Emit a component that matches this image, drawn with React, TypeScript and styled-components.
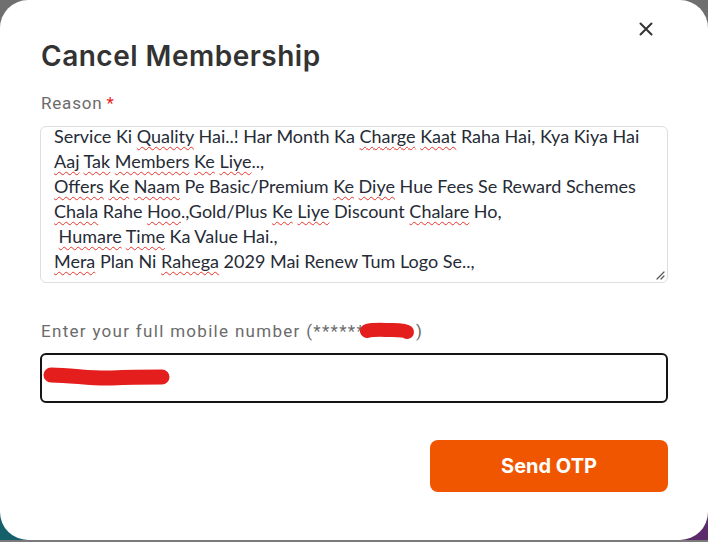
import React from "react";
import styled, { createGlobalStyle } from "styled-components";

const GlobalStyle = createGlobalStyle`
  html, body { margin: 0; padding: 0; }
  body {
    width: 708px;
    height: 542px;
    overflow: hidden;
    background:
      linear-gradient(to bottom, #6f6f6f 0 50%, transparent 50%),
      linear-gradient(to right, #16606b 0 50%, #5b2b6c 50%);
  }
`;

const Backdrop = styled.div`
  width: 708px;
  height: 542px;
  display: flex;
  flex-direction: column;
`;

const Modal = styled.div`
  box-sizing: border-box;
  width: 708px;
  height: 540px;
  background: #ffffff;
  border-radius: 28px;
  padding: 19px 40px 0 40px;
  display: flex;
  flex-direction: column;
  font-family: Inter, "Liberation Sans", sans-serif;
`;

const BottomStrip = styled.div`
  height: 2px;
  background: #7a7a7a;
`;

const Header = styled.div`
  display: flex;
  justify-content: flex-end;
  height: 20px;
`;

const CloseButton = styled.button`
  width: 20px;
  height: 20px;
  margin-right: 12px;
  border: none;
  background: transparent;
  padding: 0;
  display: flex;
  align-items: center;
  justify-content: center;
  cursor: pointer;
  color: #333;
`;

const Title = styled.h2`
  margin: 0 0 0 1px;
  font-family: Inter, "Liberation Sans", sans-serif;
  font-size: 28px;
  line-height: 34px;
  font-weight: 600;
  color: #333333;
  letter-spacing: 0.5px;
`;

const Label = styled.label<{ $spaced?: boolean }>`
  display: flex;
  align-items: center;
  font-family: Roboto, "Liberation Sans", sans-serif;
  font-size: 17px;
  line-height: 20px;
  color: #6b6b6b;
  letter-spacing: ${(p) => (p.$spaced ? "1.3px" : "0.8px")};
  margin-left: 1px;
`;

const Required = styled.span`
  color: #ee2222;
  margin-left: 4px;
`;

const ReasonLabel = styled(Label)`
  margin-top: 20px;
`;

const ReasonBox = styled.div`
  box-sizing: border-box;
  margin-top: 13px;
  height: 157px;
  border: 1px solid #dedede;
  border-radius: 6px;
  padding: 0 13px;
  position: relative;
  font-family: Lato, "Open Sans", sans-serif;
  font-size: 18px;
  line-height: 25px;
  color: #262b36;
  overflow: hidden;
`;

const Lines = styled.div`
  margin-top: -3px;
`;

const Line = styled.div`
  white-space: pre;
`;

const Miss = styled.span`
  text-decoration: underline wavy #e8332a;
  text-decoration-thickness: 1px;
  text-underline-offset: 3px;
`;

const Grip = styled.svg`
  position: absolute;
  right: 2px;
  bottom: 2px;
`;

const MobileLabel = styled(Label)`
  margin-top: 38px;
`;

const Scribble = styled.svg`
  margin-left: -6px;
  margin-right: 1px;
`;

const InputWrap = styled.div`
  position: relative;
  margin-top: 12px;
`;

const Input = styled.input`
  box-sizing: border-box;
  width: 100%;
  height: 50px;
  border: 2px solid #151515;
  border-radius: 6px;
  outline: none;
  padding: 0 14px;
  font-size: 16px;
  display: block;
`;

const InputScribble = styled.svg`
  position: absolute;
  left: 2px;
  top: 13px;
`;

const Footer = styled.div`
  display: flex;
  justify-content: flex-end;
  margin-top: 37px;
`;

const SendButton = styled.button`
  width: 238px;
  height: 52px;
  border: none;
  border-radius: 8px;
  background: #f05600;
  color: #ffffff;
  font-family: Inter, "Liberation Sans", sans-serif;
  font-size: 20px;
  font-weight: 700;
  cursor: pointer;
`;

const lines: React.ReactNode[] = [
  <>Service Ki <Miss>Quality</Miss> Hai..! Har Month Ka <Miss>Charge</Miss> <Miss>Kaat</Miss> Raha Hai, Kya Kiya Hai</>,
  <><Miss>Aaj</Miss> <Miss>Tak</Miss> <Miss>Members</Miss> <Miss>Ke</Miss> <Miss>Liye</Miss>..,</>,
  <><Miss>Offers</Miss> <Miss>Ke</Miss> <Miss>Naam</Miss> Pe Basic/Premium <Miss>Ke</Miss> <Miss>Diye</Miss> Hue Fees Se Reward Schemes</>,
  <><Miss>Chala</Miss> Rahe <Miss>Hoo</Miss>.,Gold/Plus <Miss>Ke</Miss> <Miss>Liye</Miss> Discount <Miss>Chalare</Miss> Ho,</>,
  <> <Miss>Humare</Miss> <Miss>Time</Miss> Ka Value Hai.,</>,
  <><Miss>Mera</Miss> Plan Ni <Miss>Rahega</Miss> 2029 Mai Renew Tum Logo Se..,</>,
];

export default function App() {
  return (
    <>
      <GlobalStyle />
      <Backdrop>
        <Modal>
          <Header>
            <CloseButton aria-label="Close">
              <svg width="14" height="14" viewBox="0 0 14 14">
                <path d="M1.5 1.5 L12.5 12.5 M12.5 1.5 L1.5 12.5" stroke="#333" strokeWidth="2" strokeLinecap="round" />
              </svg>
            </CloseButton>
          </Header>
          <Title>Cancel Membership</Title>
          <ReasonLabel>
            Reason<Required>*</Required>
          </ReasonLabel>
          <ReasonBox>
            <Lines>
              {lines.map((l, i) => (
                <Line key={i}>{l}</Line>
              ))}
            </Lines>
            <Grip width="10" height="10" viewBox="0 0 10 10">
              <path d="M9 2 L2 9 M9 6 L6 9" stroke="#555" strokeWidth="1.2" strokeLinecap="round" />
            </Grip>
          </ReasonBox>
          <MobileLabel $spaced>
            Enter your full mobile number (******
            <Scribble width="56" height="20" viewBox="0 0 56 20">
              <path d="M8 10 C 15 8, 25 9, 33 9 C 41 9, 47 10, 48 11" stroke="#e41d1d" strokeWidth="14" strokeLinecap="round" fill="none" />
            </Scribble>
            )
          </MobileLabel>
          <InputWrap>
            <Input type="text" aria-label="Mobile number" />
            <InputScribble width="130" height="24" viewBox="0 0 130 24">
              <path d="M9 9 C 30 9, 50 13, 70 12 C 90 11, 110 11, 120 11" stroke="#e41d1d" strokeWidth="15" strokeLinecap="round" fill="none" />
            </InputScribble>
          </InputWrap>
          <Footer>
            <SendButton>Send OTP</SendButton>
          </Footer>
        </Modal>
        <BottomStrip />
      </Backdrop>
    </>
  );
}
